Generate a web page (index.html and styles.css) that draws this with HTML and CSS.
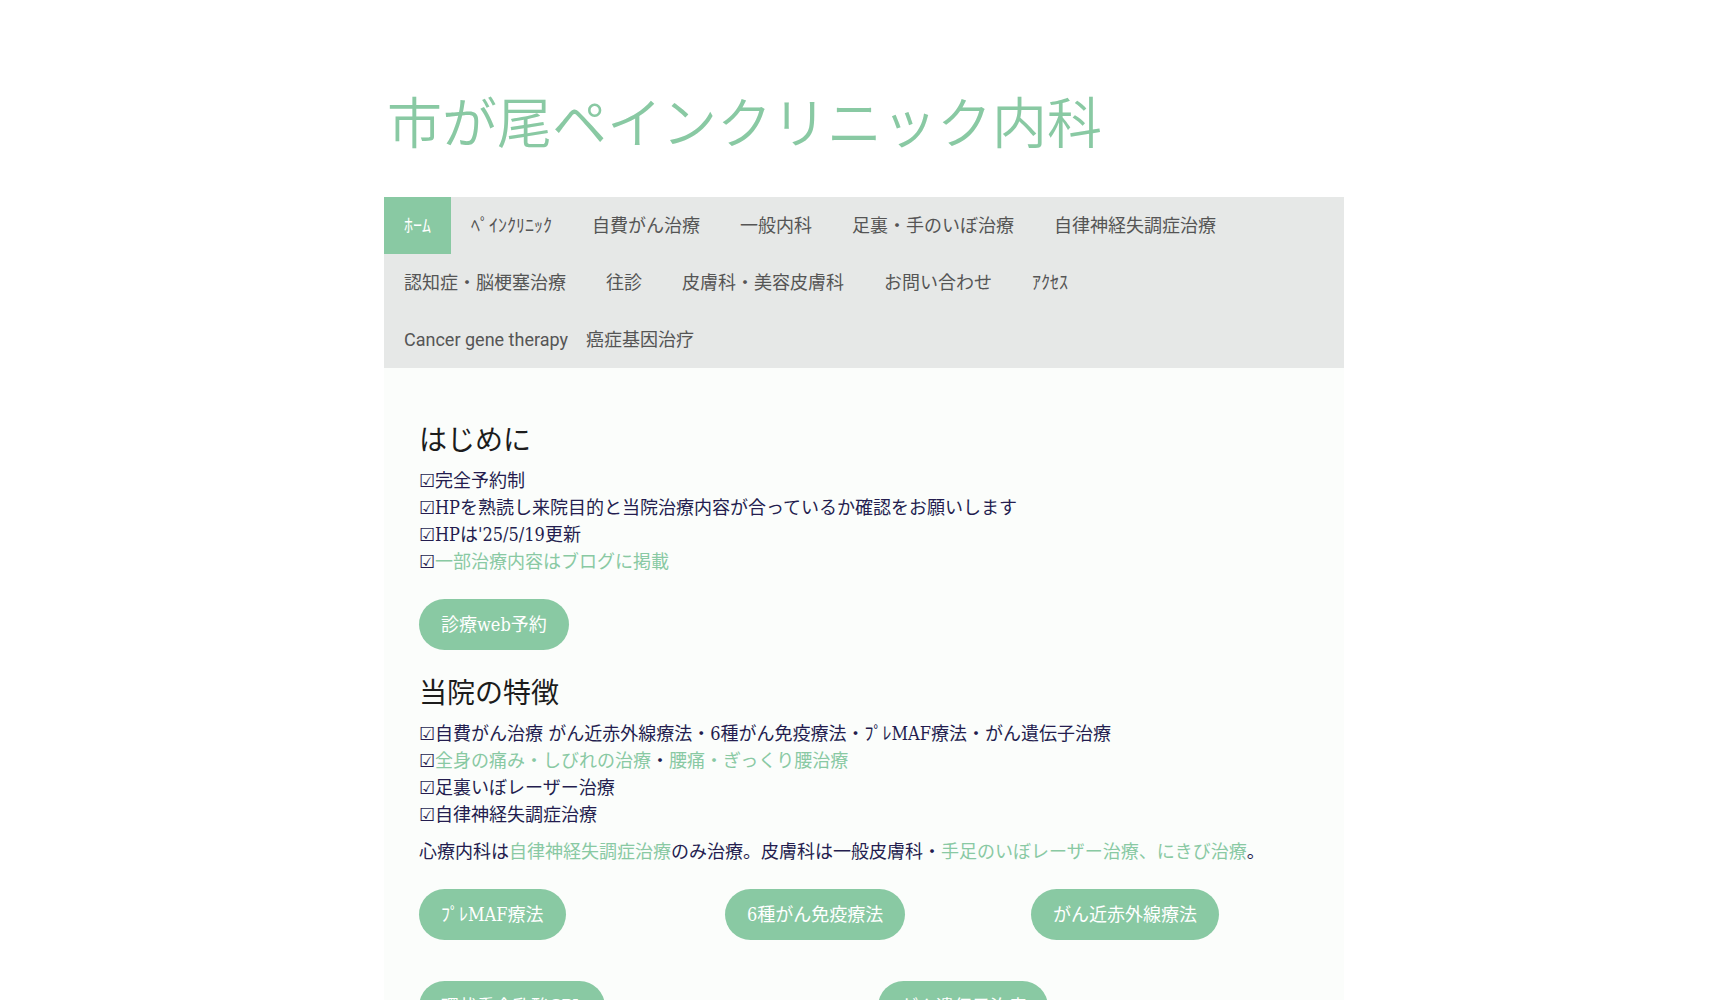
FILE: index.html
```html
<!DOCTYPE html>
<html lang="ja">
<head>
<meta charset="utf-8">
<title>市が尾ペインクリニック内科</title>
<link rel="stylesheet" href="styles.css">
</head>
<body>
<div class="wrap">
  <header class="header">
    <h1 class="site-title">市が尾ペインクリニック内科</h1>
  </header>
  <nav class="nav">
    <a class="nav-item is-current" href="#">ﾎｰﾑ</a>
    <a class="nav-item" href="#">ﾍﾟｲﾝｸﾘﾆｯｸ</a>
    <a class="nav-item" href="#">自費がん治療</a>
    <a class="nav-item" href="#">一般内科</a>
    <a class="nav-item" href="#">足裏・手のいぼ治療</a>
    <a class="nav-item" href="#">自律神経失調症治療</a>
    <a class="nav-item" href="#">認知症・脳梗塞治療</a>
    <a class="nav-item" href="#">往診</a>
    <a class="nav-item" href="#">皮膚科・美容皮膚科</a>
    <a class="nav-item" href="#">お問い合わせ</a>
    <a class="nav-item" href="#">ｱｸｾｽ</a>
    <a class="nav-item" href="#">Cancer gene therapy　癌症基因治疗</a>
  </nav>
  <main class="content">
    <h2 class="heading">はじめに</h2>
    <ul class="checklist">
      <li>☑完全予約制</li>
      <li>☑HPを熟読し来院目的と当院治療内容が合っているか確認をお願いします</li>
      <li>☑HPは'25/5/19更新</li>
      <li>☑<a class="link" href="#">一部治療内容はブログに掲載</a></li>
    </ul>
    <div class="btn-row">
      <a class="btn" href="#">診療web予約</a>
    </div>
    <h2 class="heading">当院の特徴</h2>
    <ul class="checklist">
      <li>☑自費がん治療 がん近赤外線療法・6種がん免疫療法・ﾌﾟﾚMAF療法・がん遺伝子治療</li>
      <li>☑<a class="link" href="#">全身の痛み・しびれの治療</a>・<a class="link" href="#">腰痛・ぎっくり腰治療</a></li>
      <li>☑足裏いぼレーザー治療</li>
      <li>☑自律神経失調症治療</li>
    </ul>
    <p class="para">心療内科は<a class="link" href="#">自律神経失調症治療</a>のみ治療。皮膚科は一般皮膚科・<a class="link" href="#">手足のいぼレーザー治療、にきび治療</a>。</p>
    <div class="btn-grid cols-3">
      <div class="btn-cell"><a class="btn" href="#">ﾌﾟﾚMAF療法</a></div>
      <div class="btn-cell"><a class="btn" href="#">6種がん免疫療法</a></div>
      <div class="btn-cell"><a class="btn" href="#">がん近赤外線療法</a></div>
    </div>
    <div class="btn-grid cols-2">
      <div class="btn-cell"><a class="btn" href="#">環状重合乳酸CPL</a></div>
      <div class="btn-cell"><a class="btn" href="#">がん遺伝子治療</a></div>
    </div>
    <ul class="checklist more">
      <li>☑当院の診療時間</li>
      <li>☑アクセス</li>
    </ul>
  </main>
</div>
</body>
</html>
```

FILE: styles.css
```css
html, body {
  margin: 0;
  padding: 0;
  background: #ffffff;
}

body {
  font-family: "DejaVu Serif Condensed", "Liberation Serif", "Noto Sans CJK JP", serif;
  color: #241d4f;
}

a {
  text-decoration: none;
  color: inherit;
}

.wrap {
  width: 960px;
  margin: 0 auto;
}

.header {
  padding-top: 86px;
}

.site-title {
  margin: 0 0 45px;
  padding-left: 3px;
  font-family: "Noto Sans CJK JP", sans-serif;
  font-weight: 350;
  font-size: 55px;
  line-height: 66px;
  color: #89c9a3;
  letter-spacing: 0;
}

.nav {
  display: flex;
  flex-wrap: wrap;
  background: #e6e8e7;
}

.nav-item {
  display: block;
  height: 57px;
  line-height: 57px;
  padding: 0 20px;
  font-family: Roboto, "Noto Sans CJK JP", sans-serif;
  font-size: 18px;
  color: #555555;
  white-space: nowrap;
}

.nav-item.is-current {
  background: #89c9a3;
  color: #ffffff;
}

.content {
  background: #fbfdfb;
  padding: 52px 35px 60px;
}

.heading {
  margin: 0 0 11px;
  font-family: "Noto Sans CJK JP", sans-serif;
  font-weight: 400;
  font-size: 28px;
  line-height: 36px;
  color: #1c1c1c;
}

.checklist {
  list-style: none;
  margin: 0;
  padding: 0;
  font-size: 18px;
  line-height: 27px;
}

.link {
  color: #89c9a3;
}

.btn-row {
  margin: 24px 0 23px;
}

.btn {
  display: inline-block;
  background: #89c9a3;
  color: #ffffff;
  font-size: 18px;
  line-height: 27px;
  padding: 12px 22px;
  border-radius: 26px;
}

.para {
  margin: 10px 0 0;
  font-size: 18px;
  line-height: 27px;
}

.btn-grid {
  display: grid;
  column-gap: 28px;
}

.cols-3 {
  grid-template-columns: repeat(3, 1fr);
  margin-top: 24px;
}

.cols-2 {
  grid-template-columns: repeat(2, 1fr);
  margin-top: 41px;
}

.more {
  margin-top: 40px;
}
```
